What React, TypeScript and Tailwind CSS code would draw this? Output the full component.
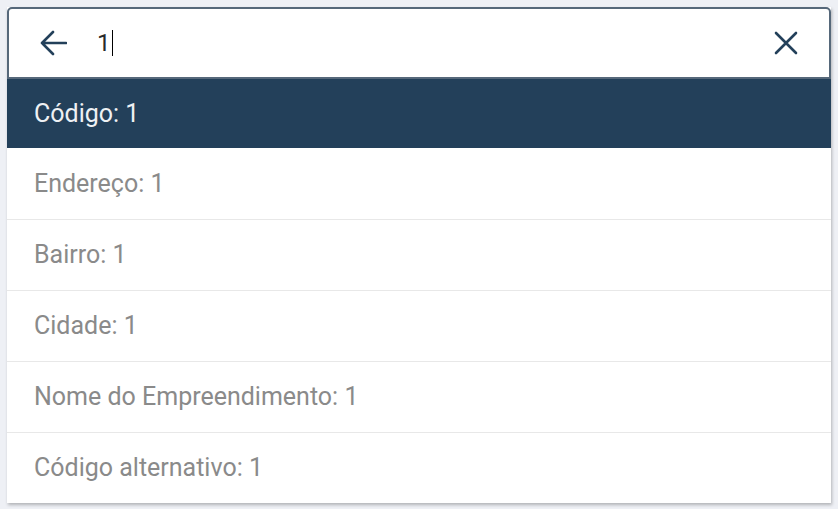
import React from 'react';

const options = [
  'Endereço: 1',
  'Bairro: 1',
  'Cidade: 1',
  'Nome do Empreendimento: 1',
  'Código alternativo: 1',
];

const App = () => {
  return (
    <div className="min-h-screen bg-[#eef0f5] px-[7px] pt-[7px] font-['Roboto',sans-serif]">
      <div className="bg-white shadow-[1px_2px_3px_rgba(0,0,0,0.25)]">
        {/* Search bar */}
        <div className="h-[72px] flex items-center bg-white border-2 border-[#56687a] rounded-t-[5px] pl-[31px] pr-[31px]">
          <svg width="27" height="26" viewBox="0 0 27 26" fill="none" stroke="#23405a" strokeWidth="2.6" strokeLinecap="round" strokeLinejoin="round">
            <path d="M26 13H2M13 2L2 13l11 11" />
          </svg>
          <div className="ml-[30px] flex items-center text-[24px] text-[#2a2a2a]">
            <span>1</span>
            <span className="w-px h-[26px] bg-black ml-px" />
          </div>
          <div className="flex-1" />
          <svg width="24" height="24" viewBox="0 0 24 24" fill="none" stroke="#23405a" strokeWidth="2.6" strokeLinecap="round">
            <path d="M2 2l20 20M22 2L2 22" />
          </svg>
        </div>

        {/* Options */}
        <div className="h-[69px] flex items-center bg-[#23405a] pl-[27px] text-[25px] text-[#eef1f4]">
          Código: 1
        </div>
        {options.map((o, i) => (
          <div
            key={o}
            className={`h-[71px] flex items-center pl-[27px] text-[25px] text-[#8a8a8a] ${i > 0 ? 'border-t border-[#e8e8e8]' : ''}`}
          >
            {o}
          </div>
        ))}
      </div>
    </div>
  );
};

export default App;
